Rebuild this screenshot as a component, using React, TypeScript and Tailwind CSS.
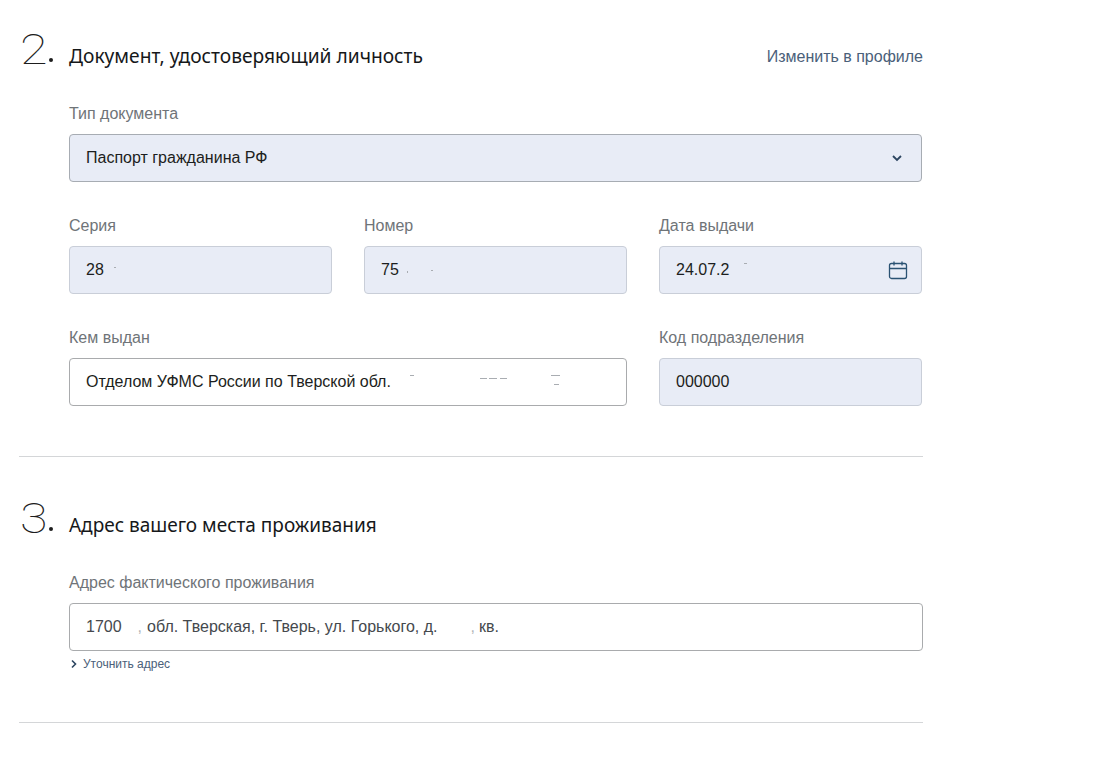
import React from "react";

function Label({ children }: { children: React.ReactNode }) {
  return <div className="h-[25px] pt-px mb-2 text-[16px] leading-6 text-[#6f7478]">{children}</div>;
}

function Box({ children, filled, strong, className }: { children?: React.ReactNode; filled?: boolean; strong?: boolean; className?: string }) {
  const tone = filled
    ? strong
      ? "bg-[#e8ecf6] border-[#a7acb3]"
      : "bg-[#e8ecf6] border-[#c9ced8]"
    : "bg-white border-[#a9abad]";
  return (
    <div className={`relative flex h-12 items-center rounded border px-4 text-[16px] text-[#1c1e20] ${tone} ${className ?? ""}`}>
      {children}
    </div>
  );
}

function Speck({ className }: { className: string }) {
  return <span className={`absolute bg-[#a9adb2] ${className}`} />;
}

function Head({ n, title, right, size }: { n: string; title: string; right?: string; size: string }) {
  return (
    <div className="flex h-14 items-center">
      <div className="relative w-[50px] h-14 shrink-0">
        <span className="absolute left-px top-[-6px] origin-left scale-x-[1.2] font-['Roboto',sans-serif] text-[42px] leading-[56px] font-thin text-[#1d1d1d]">{n}</span>
        <span className="absolute left-[30px] top-[30px] h-1 w-1 rounded-full bg-[#1d1d1d]" />
      </div>
      <h2 className={`flex-1 font-['Noto_Sans',sans-serif] font-normal text-[#16181a] ${size}`}>{title}</h2>
      {right && <a className="pt-[2px] text-[16px] text-[#4a6079]">{right}</a>}
    </div>
  );
}

export default function App() {
  return (
    <main className="min-h-[760px] w-[1115px] bg-white pl-[19px] pt-[28px] font-['Liberation_Sans',Arial,sans-serif]">
      <div className="w-[904px]">
        <Head n="2" title="Документ, удостоверяющий личность" right="Изменить в профиле" size="text-[19.2px]" />
        <div className="ml-[50px] mt-[17px] w-[853px]">
          <Label>Тип документа</Label>
          <Box filled strong className="justify-between">
            <span>Паспорт гражданина РФ</span>
            <svg width="12" height="8" viewBox="0 0 12 8" fill="none" className="mr-[2px]">
              <path d="M2 2l4 4 4-4" stroke="#2c4560" strokeWidth="1.8" />
            </svg>
          </Box>
          <div className="mt-[31px] grid grid-cols-3 gap-x-8 gap-y-[31px]">
            <div>
              <Label>Серия</Label>
              <Box filled>
                28
                <Speck className="left-[44px] top-[20px] h-px w-[2px]" />
              </Box>
            </div>
            <div>
              <Label>Номер</Label>
              <Box filled>
                75
                <Speck className="left-[42px] top-[24px] h-[2px] w-px" />
                <Speck className="left-[66px] top-[23px] h-px w-[2px]" />
              </Box>
            </div>
            <div>
              <Label>Дата выдачи</Label>
              <Box filled className="justify-between">
                <span>24.07.2</span>
                <Speck className="left-[84px] top-[16px] h-px w-[3px]" />
                <svg width="20" height="20" viewBox="0 0 20 20" fill="none" className="-mr-[3px]">
                  <rect x="1.5" y="3.5" width="17" height="15" rx="2" stroke="#2a5273" strokeWidth="1.3" />
                  <path d="M1.5 8.5h17M6 1.5v4M14 1.5v4" stroke="#2a5273" strokeWidth="1.3" />
                </svg>
              </Box>
            </div>
            <div className="col-span-2">
              <Label>Кем выдан</Label>
              <Box>
                Отделом УФМС России по Тверской обл.
                <Speck className="left-[340px] top-[16px] h-px w-[4px]" />
                <Speck className="left-[410px] top-[19px] h-px w-[7px]" />
                <Speck className="left-[419px] top-[19px] h-px w-[8px]" />
                <Speck className="left-[430px] top-[19px] h-px w-[7px]" />
                <Speck className="left-[481px] top-[16px] h-px w-[9px]" />
                <Speck className="left-[484px] top-[25px] h-px w-[5px]" />
              </Box>
            </div>
            <div>
              <Label>Код подразделения</Label>
              <Box filled>000000</Box>
            </div>
          </div>
        </div>
        <hr className="mt-[50px] border-t border-[#d4d6d8]" />
        <div className="mt-10">
          <Head n="3" title="Адрес вашего места проживания" size="text-[19px]" />
        </div>
        <div className="ml-[50px] mt-[17px] w-[854px]">
          <Label>Адрес фактического проживания</Label>
          <Box className="text-[#45494d]">
            <span>1700</span>
            <span className="ml-[16px] text-[#b4b7ba]">,</span>
            <span className="ml-[5px]">обл. Тверская, г. Тверь, ул. Горького, д.</span>
            <span className="ml-[33px] text-[#b4b7ba]">,</span>
            <span className="ml-[4px]">кв.</span>
          </Box>
          <div className="mt-[6px] flex h-[14px] items-center gap-[5px] text-[12px] leading-[14px] text-[#4a6079]">
            <svg width="8" height="10" viewBox="0 0 8 10" fill="none" className="ml-px">
              <path d="M2 1.5L5.5 5 2 8.5" stroke="#2c4560" strokeWidth="1.6" />
            </svg>
            Уточнить адрес
          </div>
        </div>
        <hr className="mt-[51px] border-t border-[#d4d6d8]" />
      </div>
    </main>
  );
}
